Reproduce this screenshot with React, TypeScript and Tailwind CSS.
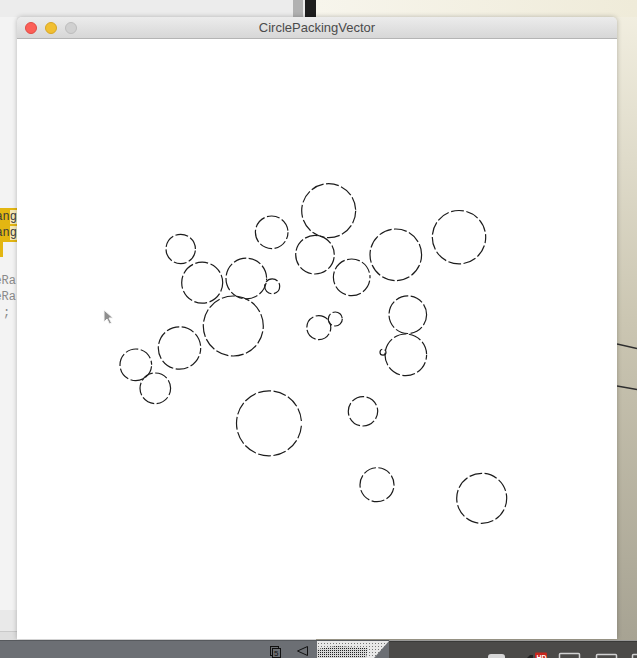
import React from "react";

const circles: [number, number, number][] = [
  [311.7, 171.7, 27],
  [442, 198.2, 26.7],
  [163.7, 210, 14.7],
  [254.7, 193.3, 16.3],
  [298, 215.7, 19.3],
  [378.8, 215.8, 25.8],
  [334.7, 238.3, 18.3],
  [185.2, 243.7, 20.5],
  [229.3, 239.5, 20.3],
  [255.2, 247.3, 7.5],
  [216.3, 287, 30],
  [390.8, 275.7, 18.8],
  [301.8, 288.6, 12],
  [318.3, 280, 7],
  [388.8, 315.8, 20.8],
  [366, 313.2, 3],
  [162.5, 309, 21.2],
  [118.8, 325.8, 15.8],
  [138.3, 349.3, 15.3],
  [252, 384.3, 32.5],
  [346, 372.3, 14.7],
  [360, 445.7, 17],
  [464.7, 459.3, 25],
];

function Canvas() {
  return (
    <svg width="600" height="600" viewBox="0 0 600 600" className="block">
      {circles.map(([cx, cy, r], i) => (
        <circle
          key={i}
          cx={cx}
          cy={cy}
          r={r}
          fill="none"
          stroke="#1c1c1c"
          strokeWidth={1.2}
          strokeDasharray="13 2.5"
          strokeDashoffset={(i * 7) % 15}
        />
      ))}
    </svg>
  );
}

function LeftEditor() {
  return (
    <div className="absolute left-0 top-0 w-[17px] h-[640px] bg-[#f3f3f3] overflow-hidden font-['Liberation_Mono',monospace] text-[12px] leading-[16px]">
      <div className="h-[17px] bg-[#ececec]" />
      <div className="h-[191px]" />
      <div className="h-[34px] bg-[#e3b612] flex flex-col items-end text-[#3a3a3a] pt-[1px]">
        <div className="whitespace-nowrap">
          an<span className="bg-[#f6eab8]">g</span>
        </div>
        <div className="whitespace-nowrap">
          an<span className="bg-[#f6eab8]">g</span>
        </div>
      </div>
      <div className="h-[15px] w-[3px] bg-[#e3b612]" />
      <div className="h-[16px]" />
      <div className="flex flex-col items-end text-[#8a8a8a] pr-[1px]">
        <div className="whitespace-nowrap">eRa</div>
        <div className="whitespace-nowrap">eRa</div>
        <div className="whitespace-nowrap self-start pl-[3px]">;</div>
      </div>
      <div className="h-[289px]" />
      <div className="h-[22px] bg-[#e9e9e9] border-b border-[#c9c9c9]" />
      <div className="h-[18px] bg-[#dedede]" />
    </div>
  );
}

function Cursor() {
  return (
    <svg
      width="12"
      height="17"
      viewBox="0 0 12 17"
      className="absolute left-[103px] top-[309px]"
    >
      <path
        d="M1 1 L1 13 L4 10 L6.5 15 L8.5 14 L6 9 L10 9 Z"
        fill="#6a6a6a"
        stroke="#f4f4f4"
        strokeWidth="1"
        opacity="0.75"
      />
    </svg>
  );
}

function Window() {
  return (
    <div className="absolute left-[17px] top-[17px] w-[600px] shadow-[0_0_5px_rgba(0,0,0,0.25)] rounded-t-[5px]">
      <div className="relative h-[22px] rounded-t-[5px] bg-linear-to-b from-[#ececec] to-[#d7d7d7] border-b border-[#b4b4b4] flex items-center pl-[8px] gap-[8px]">
        <span className="w-[12px] h-[12px] rounded-full bg-[#fc5f57] border border-[#df4b44]" />
        <span className="w-[12px] h-[12px] rounded-full bg-[#f1bf32] border border-[#d8a623]" />
        <span className="w-[12px] h-[12px] rounded-full bg-[#d0d0d0] border border-[#bdbdbd]" />
        <div className="absolute inset-0 flex items-center justify-center pointer-events-none">
          <span className="font-['Liberation_Sans',Arial,sans-serif] text-[13px] text-[#4b4b4b] pt-[1px]">
            CirclePackingVector
          </span>
        </div>
      </div>
      <div className="h-[600px] bg-white">
        <Canvas />
      </div>
    </div>
  );
}

function Taskbar() {
  return (
    <div className="relative h-[18px] w-[637px] bg-[#6c6f74] border-t border-[#56595d] flex items-start">
      <svg width="637" height="18" className="absolute left-0 top-[-1px]">
        <defs>
          <pattern id="dith" width="3" height="3" patternUnits="userSpaceOnUse">
            <rect width="3" height="3" fill="#e8e8e8" />
            <rect width="1" height="1" fill="#777" />
          </pattern>
          <pattern id="dith2" width="2" height="2" patternUnits="userSpaceOnUse">
            <rect width="2" height="2" fill="#d8d8d8" />
            <rect width="1" height="1" fill="#222" />
          </pattern>
        </defs>
        <rect x="389" y="0" width="248" height="18" fill="#4b4a48" />
        <rect x="389" y="0" width="248" height="1" fill="#9a9a98" />
        <rect x="389" y="1" width="248" height="1" fill="#3a3a38" />
        <polygon points="317,1 389,1 374,18 317,18" fill="url(#dith)" />
        <polygon points="317,9 336,6 368,8 366,18 317,18" fill="url(#dith2)" />
        {/* document icon */}
        <rect x="270.5" y="6.5" width="8" height="9" fill="none" stroke="#111" />
        <rect x="272.5" y="8.5" width="8" height="9" fill="#6c6f74" stroke="#111" />
        <text x="274" y="16" fontSize="8" fill="#111" fontFamily="Liberation Sans, Arial, sans-serif">5</text>
        {/* back triangle */}
        <polygon points="307.5,6.5 297.5,11 307.5,15.5" fill="none" stroke="#111" strokeWidth="1" />
        {/* right icons */}
        <rect x="488" y="14" width="17" height="8" rx="3" fill="#d6d6d6" />
        <path d="M527 18 L530 15 L533 15 L533 18 Z" fill="#222" />
        <rect x="535" y="12.5" width="12" height="8" rx="1" fill="#c8271d" />
        <text x="536.5" y="19.5" fontSize="7" fill="#fff" fontWeight="bold" fontFamily="Liberation Sans, Arial, sans-serif">HD</text>
        <rect x="559.5" y="13.5" width="20" height="8" rx="1" fill="none" stroke="#d2d2d2" strokeWidth="1.5" />
        <rect x="596.5" y="14.5" width="20" height="8" rx="1" fill="none" stroke="#d2d2d2" strokeWidth="1.5" />
        <rect x="632.5" y="14.5" width="20" height="8" rx="1" fill="none" stroke="#d2d2d2" strokeWidth="1.5" />
      </svg>
    </div>
  );
}

export default function App() {
  return (
    <div className="w-[637px] h-[658px] overflow-hidden flex flex-col bg-[#ececec]">
      <div className="relative h-[640px] w-[637px]">
        {/* right-side desktop / background window */}
        <div className="absolute left-[316px] top-0 w-[321px] h-[640px] bg-linear-to-b from-[#f3f0e2] via-[#cbc6b2] to-[#a7a393]" />
        <div className="absolute left-[316px] top-0 w-[321px] h-[17px] bg-linear-to-r from-[#f7f5ec] to-[#efebd9]" />
        <div className="absolute left-[293px] top-0 w-[10px] h-[17px] bg-[#b1b1b1]" />
        <div className="absolute left-[305px] top-0 w-[11px] h-[17px] bg-[#1e1e1e]" />
        <svg width="20" height="640" className="absolute left-[617px] top-0">
          <line x1="0" y1="344" x2="20" y2="348.5" stroke="#2e2e2e" strokeWidth="1.5" />
          <line x1="0" y1="386" x2="20" y2="389.5" stroke="#2e2e2e" strokeWidth="1.5" />
        </svg>
        <LeftEditor />
        <Window />
        <Cursor />
      </div>
      <Taskbar />
    </div>
  );
}
